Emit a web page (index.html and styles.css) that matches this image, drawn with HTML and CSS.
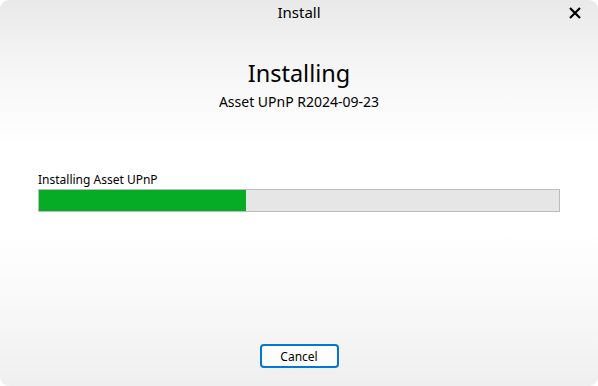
FILE: index.html
```html
<!DOCTYPE html>
<html lang="en">
<head>
  <meta charset="UTF-8">
  <title>Install</title>
  <link rel="stylesheet" href="styles.css">
</head>
<body>
  <div class="window">
    <div class="titlebar">
      <span class="title">Install</span>
      <button class="close" aria-label="Close">
        <svg width="12" height="12" viewBox="0 0 12 12"><path d="M1 1L11 11M11 1L1 11" stroke="#000" stroke-width="2.2" fill="none"/></svg>
      </button>
    </div>

    <h1 class="heading">Installing</h1>
    <p class="subtitle">Asset UPnP R2024-09-23</p>

    <div class="progress-block">
      <div class="progress-label">Installing Asset UPnP</div>
      <div class="progress">
        <div class="progress-fill" style="width: 39.8%"></div>
      </div>
    </div>

    <div class="footer">
      <button class="btn">Cancel</button>
    </div>
  </div>
</body>
</html>
```

FILE: styles.css
```css
* { box-sizing: border-box; margin: 0; padding: 0; }
body { background: #fff; font-family: 'Noto Sans', 'Open Sans', sans-serif; color: #000; }
.window { width: 598px; height: 386px; border-radius: 9px; overflow: hidden; display: flex; flex-direction: column;
  background: linear-gradient(to bottom, #e9e9e9 0%, #f7f7f7 20%, #fff 38%, #fff 60%, #f6f6f6 85%, #efefef 100%); }
.titlebar { position: relative; height: 26px; text-align: center; }
.title { font-size: 15px; line-height: 25px; }
.close { position: absolute; top: 7px; right: 17px; width: 12px; height: 12px; border: none; background: none; display: flex; }
.heading { margin-top: 32px; font-size: 23.5px; line-height: 30px; font-weight: 400; text-align: center; }
.subtitle { margin-top: 4px; font-size: 14px; line-height: 20px; text-align: center; }
.progress-block { margin: 60px 38px 0 38px; }
.progress-label { font-size: 12px; line-height: 16px; margin-bottom: 1px; }
.progress { height: 23px; border: 1px solid #bcbcbc; background: #e6e6e6; }
.progress-fill { height: 100%; background: #06ab26; }
.footer { margin-top: auto; padding-bottom: 18px; display: flex; justify-content: center; }
.btn { width: 79px; height: 24px; border: 2px solid #0078d4; border-radius: 4px; background: #fdfdfd; font-family: inherit; font-size: 12px; color: #000; }
```
